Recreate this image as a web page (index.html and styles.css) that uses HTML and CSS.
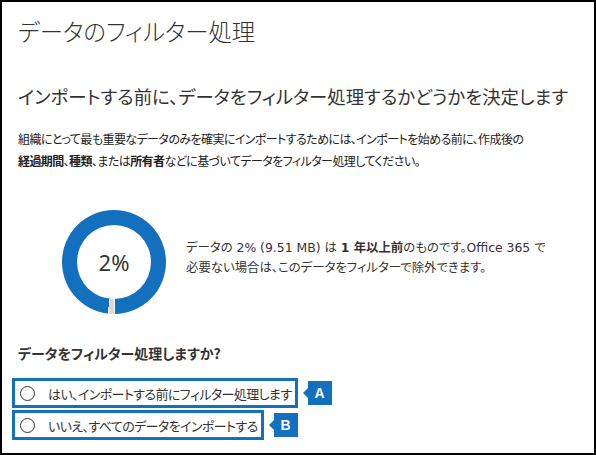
FILE: index.html
```html
<!DOCTYPE html>
<html lang="ja">
<head>
<meta charset="utf-8">
<link rel="stylesheet" href="styles.css">
</head>
<body>
<div class="frame">
  <h1 class="title">データのフィルター処理</h1>
  <h2 class="subtitle">インポートする前に、データをフィルター処理するかどうかを決定します</h2>
  <p class="intro">組織にとって最も重要なデータのみを確実にインポートするためには、インポートを始める前に、作成後の<br><b>経過期間</b>、<b>種類</b>、または<b>所有者</b>などに基づいてデータをフィルター処理してください。</p>
  <div class="stats">
    <div class="donut"><div class="hole">2%</div></div>
    <p class="stats-text">データの 2% (9.51 MB) は <b>1 年以上前</b>のものです。Office 365 で<br>必要ない場合は、このデータをフィルターで除外できます。</p>
  </div>
  <p class="question">データをフィルター処理しますか?</p>
  <div class="options">
    <div class="option-row">
      <label class="option"><span class="radio"></span><span class="opt-text">はい、インポートする前にフィルター処理します</span></label>
      <span class="badge">A</span>
    </div>
    <div class="option-row">
      <label class="option"><span class="radio"></span><span class="opt-text">いいえ、すべてのデータをインポートする</span></label>
      <span class="badge">B</span>
    </div>
  </div>
</div>
</body>
</html>
```
FILE: styles.css
```css
* { box-sizing: border-box; }
html, body { margin: 0; padding: 0; background: #fff; }
body {
  font-family: "Noto Sans CJK JP", "Noto Sans", sans-serif;
  font-feature-settings: "palt";
  color: #333;
}
.frame {
  width: 596px;
  height: 455px;
  border: 2px solid #000;
  padding: 0 0 0 16px;
  overflow: hidden;
}
.title {
  margin: 13px 0 0 0;
  font-size: 23.4px;
  line-height: 32px;
  font-weight: 300;
  color: #333;
}
.subtitle {
  margin: 35px 0 0 0;
  font-size: 18.4px;
  line-height: 28px;
  font-weight: 400;
  color: #333;
}
.intro {
  margin: 18px 0 0 0;
  font-size: 12px;
  letter-spacing: -0.58px;
  line-height: 22px;
  color: #222;
}
.intro b { font-weight: 700; }
.stats {
  display: flex;
  align-items: center;
  margin-top: 38px;
  padding-left: 44px;
}
.donut {
  width: 104px;
  height: 104px;
  border-radius: 50%;
  background: conic-gradient(#1370bf 0deg 179deg, #fff 179deg 180deg, #d9d9d9 180deg 186deg, #fff 186deg 187deg, #1370bf 187deg 360deg);
  display: flex;
  align-items: center;
  justify-content: center;
  flex: none;
}
.hole {
  width: 74px;
  height: 74px;
  border-radius: 50%;
  background: #fff;
  display: flex;
  align-items: center;
  justify-content: center;
  font-family: "Noto Sans", sans-serif;
  font-size: 22px;
  color: #333;
}
.stats-text {
  margin: 0 0 8px 20px;
  font-family: "DejaVu Sans", "Noto Sans CJK JP", sans-serif;
  font-size: 12.4px;
  line-height: 20px;
  color: #333;
}
.stats-text b { font-weight: 700; }
.question {
  margin: 29px 0 0 0;
  font-size: 14px;
  line-height: 20px;
  font-weight: 700;
  color: #333;
}
.options {
  margin: 15px 0 0 -6px;
  display: flex;
  flex-direction: column;
  gap: 2px;
}
.option-row {
  display: flex;
  align-items: center;
  gap: 10px;
}
.option {
  display: flex;
  align-items: center;
  height: 30px;
  border: 3px solid #1370bf;
  padding: 0 3px 0 5px;
}
.radio {
  width: 15px;
  height: 15px;
  border: 1.5px solid #333;
  border-radius: 50%;
  flex: none;
}
.opt-text {
  margin-left: 13px;
  font-size: 13px;
  letter-spacing: -0.6px;
  color: #333;
}
.badge {
  position: relative;
  width: 24px;
  height: 24px;
  background: #1370bf;
  color: #fff;
  font-family: "Liberation Sans", sans-serif;
  font-weight: 700;
  font-size: 14px;
  display: flex;
  align-items: center;
  justify-content: center;
}
.badge::before {
  content: "";
  position: absolute;
  left: -5px;
  top: 7px;
  border-top: 5px solid transparent;
  border-bottom: 5px solid transparent;
  border-right: 5px solid #1370bf;
}
```
